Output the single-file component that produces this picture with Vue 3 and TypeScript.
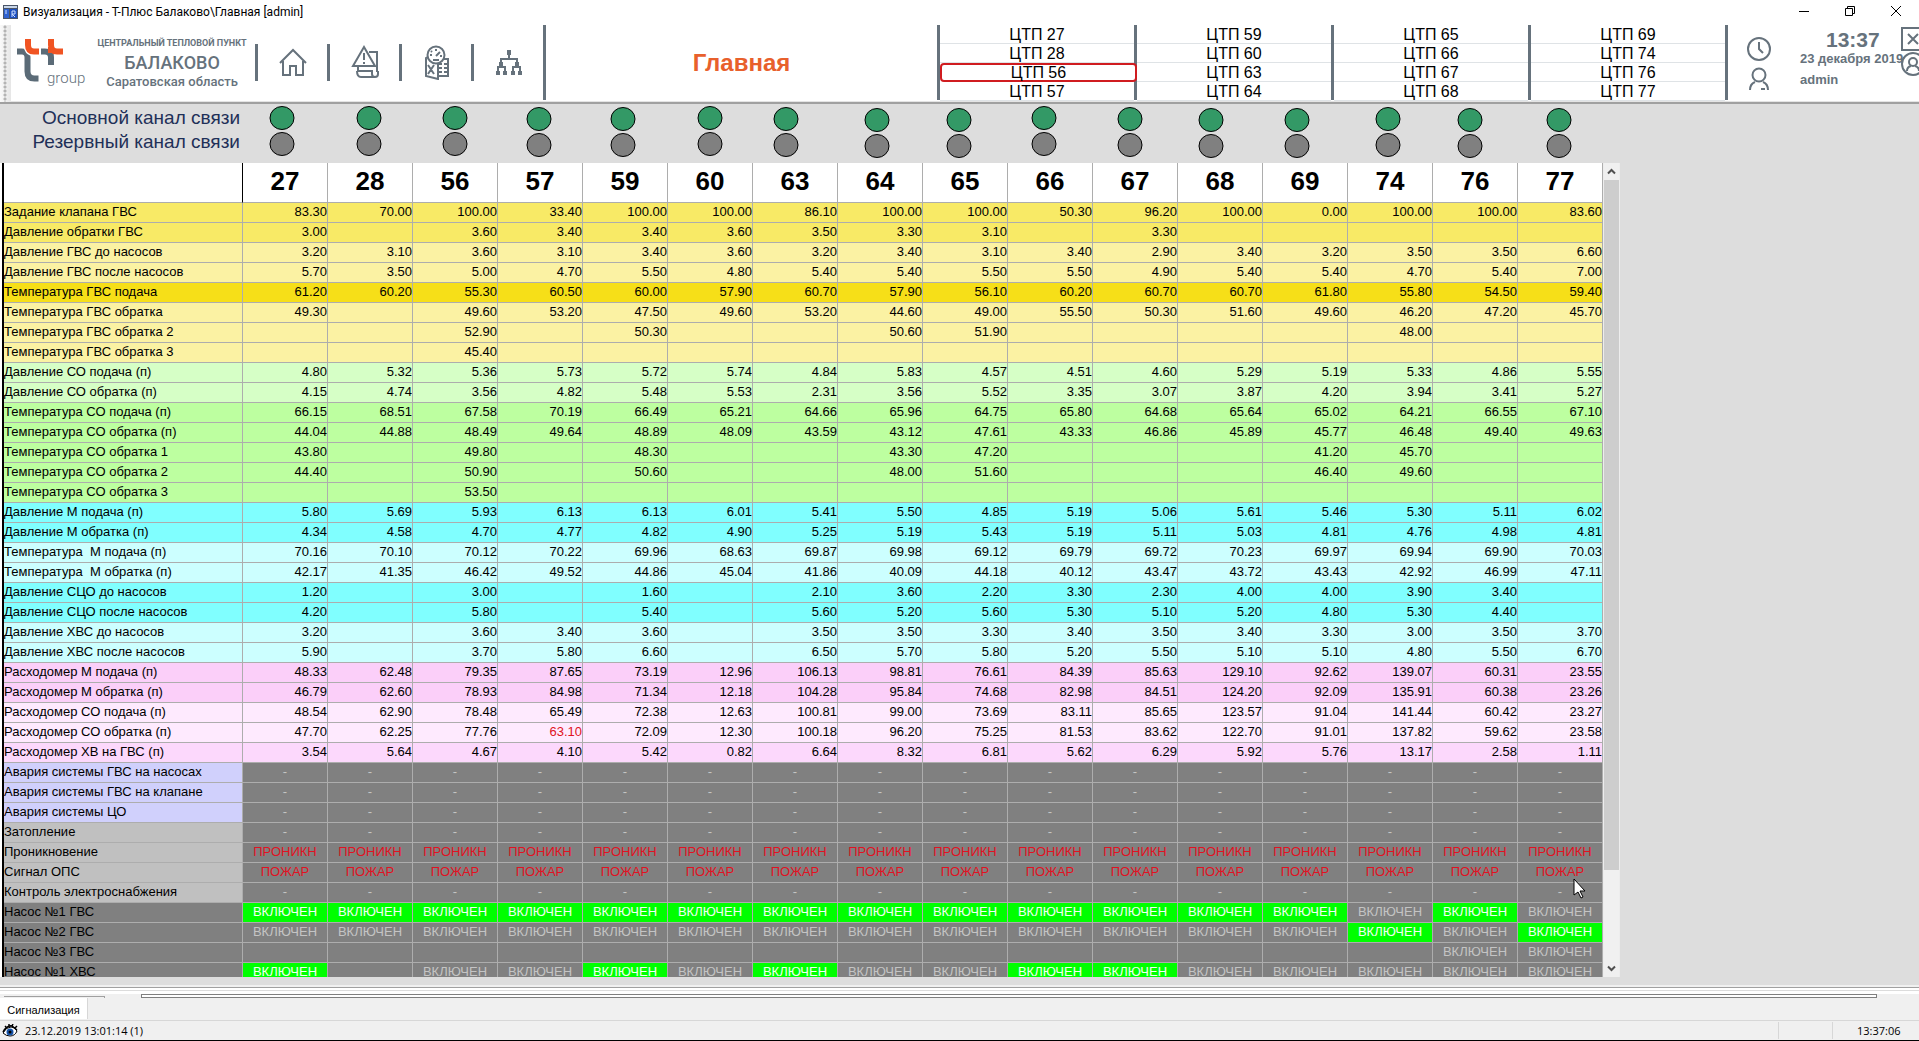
<script setup lang="ts">
interface Lamp {
  id: string
  x: number
  y: number
}

interface Row {
  label: string
  tone: string
  cells: string[]
}

const home = 'Главная'

// Link lamps: free positions inside the channel strip
const lamps: Lamp[] = [
  { id: '27', x: 40, y: 13 },
  { id: '28', x: 127, y: 13 },
  { id: '56', x: 213, y: 13 },
  { id: '57', x: 297, y: 14 },
  { id: '59', x: 381, y: 14 },
  { id: '60', x: 468, y: 13 },
  { id: '63', x: 544, y: 14 },
  { id: '64', x: 635, y: 15 },
  { id: '65', x: 717, y: 15 },
  { id: '66', x: 802, y: 13 },
  { id: '67', x: 888, y: 14 },
  { id: '68', x: 969, y: 15 },
  { id: '69', x: 1055, y: 15 },
  { id: '74', x: 1146, y: 14 },
  { id: '76', x: 1228, y: 15 },
  { id: '77', x: 1317, y: 15 },
]

const stationGroups: string[][] = [
  ['27', '28', '56', '57'],
  ['59', '60', '63', '64'],
  ['65', '66', '67', '68'],
  ['69', '74', '76', '77'],
]

const stations = stationGroups.flat()
const selected = '56'

// "_" is an empty cell
function row(label: string, tone: string, values: string): Row {
  return { label, tone, cells: values.split(' ').map((v) => (v === '_' ? '' : v)) }
}

function same(label: string, tone: string, value: string): Row {
  return { label, tone, cells: stations.map(() => value) }
}

const rows: Row[] = [
  row('Задание клапана ГВС', 'yellow', '83.30 70.00 100.00 33.40 100.00 100.00 86.10 100.00 100.00 50.30 96.20 100.00 0.00 100.00 100.00 83.60'),
  row('Давление обратки ГВС', 'yellow', '3.00 _ 3.60 3.40 3.40 3.60 3.50 3.30 3.10 _ 3.30 _ _ _ _ _'),
  row('Давление ГВС до насосов', 'cream', '3.20 3.10 3.60 3.10 3.40 3.60 3.20 3.40 3.10 3.40 2.90 3.40 3.20 3.50 3.50 6.60'),
  row('Давление ГВС после насосов', 'cream', '5.70 3.50 5.00 4.70 5.50 4.80 5.40 5.40 5.50 5.50 4.90 5.40 5.40 4.70 5.40 7.00'),
  row('Температура ГВС подача', 'gold', '61.20 60.20 55.30 60.50 60.00 57.90 60.70 57.90 56.10 60.20 60.70 60.70 61.80 55.80 54.50 59.40'),
  row('Температура ГВС обратка', 'cream', '49.30 _ 49.60 53.20 47.50 49.60 53.20 44.60 49.00 55.50 50.30 51.60 49.60 46.20 47.20 45.70'),
  row('Температура ГВС обратка 2', 'cream', '_ _ 52.90 _ 50.30 _ _ 50.60 51.90 _ _ _ _ 48.00 _ _'),
  row('Температура ГВС обратка 3', 'cream', '_ _ 45.40 _ _ _ _ _ _ _ _ _ _ _ _ _'),
  row('Давление СО подача (п)', 'mint', '4.80 5.32 5.36 5.73 5.72 5.74 4.84 5.83 4.57 4.51 4.60 5.29 5.19 5.33 4.86 5.55'),
  row('Давление СО обратка (п)', 'mint', '4.15 4.74 3.56 4.82 5.48 5.53 2.31 3.56 5.52 3.35 3.07 3.87 4.20 3.94 3.41 5.27'),
  row('Температура СО подача (п)', 'green', '66.15 68.51 67.58 70.19 66.49 65.21 64.66 65.96 64.75 65.80 64.68 65.64 65.02 64.21 66.55 67.10'),
  row('Температура СО обратка (п)', 'green', '44.04 44.88 48.49 49.64 48.89 48.09 43.59 43.12 47.61 43.33 46.86 45.89 45.77 46.48 49.40 49.63'),
  row('Температура СО обратка 1', 'green', '43.80 _ 49.80 _ 48.30 _ _ 43.30 47.20 _ _ _ 41.20 45.70 _ _'),
  row('Температура СО обратка 2', 'green', '44.40 _ 50.90 _ 50.60 _ _ 48.00 51.60 _ _ _ 46.40 49.60 _ _'),
  row('Температура СО обратка 3', 'green', '_ _ 53.50 _ _ _ _ _ _ _ _ _ _ _ _ _'),
  row('Давление М подача (п)', 'cyan', '5.80 5.69 5.93 6.13 6.13 6.01 5.41 5.50 4.85 5.19 5.06 5.61 5.46 5.30 5.11 6.02'),
  row('Давление М обратка (п)', 'cyan', '4.34 4.58 4.70 4.77 4.82 4.90 5.25 5.19 5.43 5.19 5.11 5.03 4.81 4.76 4.98 4.81'),
  row('Температура  М подача (п)', 'ice', '70.16 70.10 70.12 70.22 69.96 68.63 69.87 69.98 69.12 69.79 69.72 70.23 69.97 69.94 69.90 70.03'),
  row('Температура  М обратка (п)', 'ice', '42.17 41.35 46.42 49.52 44.86 45.04 41.86 40.09 44.18 40.12 43.47 43.72 43.43 42.92 46.99 47.11'),
  row('Давление СЦО до насосов', 'cyan', '1.20 _ 3.00 _ 1.60 _ 2.10 3.60 2.20 3.30 2.30 4.00 4.00 3.90 3.40 _'),
  row('Давление СЦО после насосов', 'cyan', '4.20 _ 5.80 _ 5.40 _ 5.60 5.20 5.60 5.30 5.10 5.20 4.80 5.30 4.40 _'),
  row('Давление ХВС до насосов', 'ice', '3.20 _ 3.60 3.40 3.60 _ 3.50 3.50 3.30 3.40 3.50 3.40 3.30 3.00 3.50 3.70'),
  row('Давление ХВС после насосов', 'ice', '5.90 _ 3.70 5.80 6.60 _ 6.50 5.70 5.80 5.20 5.50 5.10 5.10 4.80 5.50 6.70'),
  row('Расходомер М подача (п)', 'pink', '48.33 62.48 79.35 87.65 73.19 12.96 106.13 98.81 76.61 84.39 85.63 129.10 92.62 139.07 60.31 23.55'),
  row('Расходомер М обратка (п)', 'pink', '46.79 62.60 78.93 84.98 71.34 12.18 104.28 95.84 74.68 82.98 84.51 124.20 92.09 135.91 60.38 23.26'),
  row('Расходомер СО подача (п)', 'blush', '48.54 62.90 78.48 65.49 72.38 12.63 100.81 99.00 73.69 83.11 85.65 123.57 91.04 141.44 60.42 23.27'),
  row('Расходомер СО обратка (п)', 'blush', '47.70 62.25 77.76 !63.10 72.09 12.30 100.18 96.20 75.25 81.53 83.62 122.70 91.01 137.82 59.62 23.58'),
  row('Расходомер ХВ на ГВС (п)', 'rose', '3.54 5.64 4.67 4.10 5.42 0.82 6.64 8.32 6.81 5.62 6.29 5.92 5.76 13.17 2.58 1.11'),
  same('Авария системы ГВС на насосах', 'state lilac', '-'),
  same('Авария системы ГВС на клапане', 'state lilac', '-'),
  same('Авария системы ЦО', 'state lilac', '-'),
  same('Затопление', 'state silver', '-'),
  same('Проникновение', 'state silver', '!ПРОНИКН'),
  same('Сигнал ОПС', 'state silver', '!ПОЖАР'),
  same('Контроль электроснабжения', 'state silver', '-'),
  row('Насос №1 ГВС', 'state', 'on on on on on on on on on on on on on off on off'),
  row('Насос №2 ГВС', 'state', 'off off off off off off off off off off off off off on off on'),
  row('Насос №3 ГВС', 'state', '_ _ _ _ _ _ _ _ _ _ _ _ _ _ off off'),
  row('Насос №1 ХВС', 'state', 'on _ off off on off on off off on on off off off off off'),
]

function cellText(value: string): string {
  return value === 'on' || value === 'off' ? 'ВКЛЮЧЕН' : value.replace('!', '')
}

function cellClass(value: string): string {
  if (value.startsWith('!')) return 'alarm'
  return value === 'on' ? 'on' : ''
}
</script>

<template>
  <div class="shell">
    <header class="titlebar">
      <svg class="app-icon" width="15" height="14" viewBox="0 0 15 14">
        <rect width="15" height="14" fill="#4a5568" />
        <rect x="1" y="1" width="13" height="2" fill="#c9d6e8" />
        <rect x="1" y="4" width="5" height="9" fill="#2f62d0" />
        <rect x="7" y="4" width="7" height="9" fill="#1c4fc0" />
        <path d="M2 6h2M2 8h2M9 12V6h3v3h-3l3 3" stroke="#cfe0ff" fill="none" />
      </svg>
      <span class="caption">Визуализация - Т-Плюс Балаково\Главная [admin]</span>
      <div class="window-buttons">
        <button type="button" aria-label="Свернуть">
          <svg width="12" height="12" viewBox="0 0 12 12"><path d="M1 6.500h10" /></svg>
        </button>
        <button type="button" aria-label="Восстановить">
          <svg width="12" height="12" viewBox="0 0 12 12"><path d="M1.500 3.500h7v7h-7zM3.500 3.500v-2h7v7h-2" /></svg>
        </button>
        <button type="button" aria-label="Закрыть">
          <svg width="12" height="12" viewBox="0 0 12 12"><path d="M1 1l10 10M11 1L1 11" /></svg>
        </button>
      </div>
    </header>

    <div class="toolbar">
      <div class="grip"></div>
      <div class="logo">
        <svg width="46" height="43" viewBox="0 0 46 43" fill="none" stroke-width="6">
          <path d="M0 12.500h5q5.500 0 5.500 6v14q0 7 7 7h4" stroke="#5b6b77" />
          <path d="M24 12.500h4q6 0 6 6v7.500" stroke="#5b6b77" />
          <path d="M11 0v6q0 6.500 6 6.500h5" stroke="#fff" stroke-width="9" />
          <path d="M11 0v6q0 6.500 6 6.500h5" stroke="#f05423" />
          <path d="M34 0v6q0 6.500 6 6.500h6M31 11h4" stroke="#f05423" />
        </svg>
        <span class="logo-word">group</span>
      </div>
      <div class="site">
        <span class="site-kind">ЦЕНТРАЛЬНЫЙ ТЕПЛОВОЙ ПУНКТ</span>
        <strong class="site-name">БАЛАКОВО</strong>
        <span class="site-region">Саратовская область</span>
      </div>
      <nav class="tools">
        <button type="button" aria-label="Домой">
          <svg width="30" height="36" viewBox="0 0 30 36">
            <path d="M2 19L15 6l13 13M5 17v14h7v-9h6v9h7V17" />
          </svg>
        </button>
        <button type="button" aria-label="Тревоги">
          <svg width="30" height="36" viewBox="0 0 30 36">
            <path d="M14 3L3 22h22zM14 9v7M14 18v2M19 8h8v20M8 22v5M7 27h15v3q0 3 3 3t3-3v-3M7 27q0 6 4 6h14" />
          </svg>
        </button>
        <button type="button" aria-label="Отчёты">
          <svg width="30" height="36" viewBox="0 0 30 36">
            <circle cx="14" cy="11" r="8.500" />
            <path d="M14 12l4-4M8 11h2M14 5v2M9 7l1 1M18 12h2M11 16h6" />
            <path d="M6 13l-2 1v18l12 3V20M6 21l6 9M12 21l-6 9M22 15h4v17H16M17 20h3M22 20h3M17 24h3M22 24h3M17 28h3M22 28h3" />
          </svg>
        </button>
        <button type="button" aria-label="Структура">
          <svg width="30" height="36" viewBox="0 0 30 36">
            <path d="M15 7v9M7 21v-6h16v6M4 29v-6h7v6M19 29v-6h7v6" />
            <path class="solid" d="M13 6h4v5h-4zM5 18h4v4H5zM21 18h4v4h-4zM2 27h4v4H2zM9 27h4v4H9zM17 27h4v4h-4zM24 27h4v4h-4z" />
          </svg>
        </button>
      </nav>
      <h1 class="page-title">{{ home }}</h1>
      <nav class="stations">
        <div v-for="(group, g) in stationGroups" :key="g" class="station-column">
          <button
            v-for="id in group"
            :key="id"
            type="button"
            class="station"
            :class="{ selected: id === selected }"
          >ЦТП {{ id }}</button>
        </div>
      </nav>
      <div class="session">
        <div class="session-icons">
          <svg width="26" height="26" viewBox="0 0 26 26">
            <circle cx="13" cy="13" r="11" />
            <path d="M13 6v7l4 4" />
          </svg>
          <svg width="26" height="26" viewBox="0 0 26 26">
            <circle cx="13" cy="9" r="6.500" />
            <path d="M4 24q0-6 5-8M22 24q0-6-5-8M15 23h4" />
          </svg>
        </div>
        <div class="session-text">
          <time class="clock">13:37</time>
          <span class="date">23 декабря 2019</span>
          <span class="user">admin</span>
        </div>
        <div class="session-buttons">
          <button type="button" aria-label="Выход">
            <svg width="24" height="24" viewBox="0 0 24 24">
              <path d="M1 1h22v22H1zM7 7l10 10M17 7L7 17" />
            </svg>
          </button>
          <button type="button" aria-label="Сменить пользователя">
            <svg width="24" height="24" viewBox="0 0 24 24">
              <circle cx="12" cy="12" r="11" />
              <circle cx="12" cy="10" r="4" />
              <path d="M6 19q0-4 4-5M18 19q0-4-4-5" />
            </svg>
          </button>
        </div>
      </div>
    </div>

    <section class="channels">
      <div class="channel-names">
        <span>Основной канал связи</span>
        <span>Резервный канал связи</span>
      </div>
      <svg class="lamps">
        <g v-for="lamp in lamps" :key="lamp.id" stroke="#000">
          <ellipse :cx="lamp.x" :cy="lamp.y" rx="12" ry="11.500" fill="#339966" />
          <ellipse :cx="lamp.x" :cy="lamp.y + 26" rx="12" ry="11.500" fill="#808080" />
        </g>
      </svg>
    </section>

    <main class="board">
      <div class="viewport">
        <table>
          <colgroup>
            <col class="name-col" />
            <col v-for="id in stations" :key="id" class="value-col" />
          </colgroup>
          <thead>
            <tr>
              <td class="corner"></td>
              <th v-for="id in stations" :key="id" scope="col">{{ id }}</th>
            </tr>
          </thead>
          <tbody>
            <tr v-for="r in rows" :key="r.label" :class="r.tone">
              <th scope="row">{{ r.label }}</th>
              <td v-for="(value, i) in r.cells" :key="i" :class="cellClass(value)">{{ cellText(value) }}</td>
            </tr>
          </tbody>
        </table>
      </div>
      <div class="scrollbar">
        <button type="button" aria-label="Вверх">
          <svg width="9" height="7" viewBox="0 0 9 7"><path d="M1 5.500l3.500-3.500L8 5.500" /></svg>
        </button>
        <div class="thumb"></div>
        <div class="track"></div>
        <button type="button" aria-label="Вниз">
          <svg width="9" height="7" viewBox="0 0 9 7"><path d="M1 1.500L4.500 5 8 1.500" /></svg>
        </button>
      </div>
      <svg class="pointer" width="14" height="21" viewBox="0 0 14 21">
        <path d="M1 1v16l4-3 3 6 2-1-3-6h5z" fill="#fff" stroke="#000" />
      </svg>
    </main>

    <footer class="dock">
      <div class="dock-edge"></div>
      <div class="dock-strip">
        <div class="strip-short"></div>
        <div class="strip-long"></div>
      </div>
      <div class="tabs">
        <button type="button" class="tab">Сигнализация</button>
      </div>
      <div class="statusbar">
        <svg class="eye" width="16" height="14" viewBox="0 0 16 14">
          <path d="M1 9q3-6 8-6 4 0 6 4-2 5-7 5-4 0-7-3z" fill="#fff" stroke="#000" />
          <path d="M1 8Q5 1 10 2l5 4M4 3L3 2M7 2V0M10 2l1-2M13 4l2-2" fill="none" stroke="#000" stroke-width="1.500" />
          <circle cx="8" cy="8" r="3.500" fill="#1553a8" />
          <circle cx="8" cy="8" r="1.500" fill="#000" />
        </svg>
        <span class="event">23.12.2019 13:01:14 (1)</span>
        <span class="pane"></span>
        <time class="status-time">13:37:06</time>
      </div>
    </footer>
  </div>
</template>

<style>
body {
  background: #dddddd;
}
</style>

<style scoped>
.shell {
  display: flex;
  flex-direction: column;
  height: 100vh;
  overflow: hidden;
  background: #dddddd;
  color: #000;
  font-family: "Liberation Sans", Arial, sans-serif;
}

button {
  margin: 0;
  padding: 0;
  border: 0;
  background: transparent;
  color: inherit;
  font: inherit;
}

svg {
  display: block;
  flex: none;
}

/* Window caption */
.titlebar {
  display: flex;
  flex: none;
  align-items: center;
  height: 25px;
  padding: 0 0 2px 3px;
  box-sizing: border-box;
  background: #fff;
  font: 12px/22px Roboto, "Noto Sans", sans-serif;
}

.caption {
  flex: 1;
  padding-left: 5px;
}

.window-buttons {
  display: flex;
  align-self: flex-start;
}

.window-buttons button {
  display: flex;
  align-items: center;
  justify-content: center;
  width: 46px;
  height: 21px;
}

.window-buttons path {
  fill: none;
  stroke: #000;
}

/* Toolbar */
.toolbar {
  display: flex;
  flex: none;
  height: 77px;
  border-bottom: 2px solid #a0a0a0;
  background: #fff;
  box-shadow: inset 0 -1px #e4e4e4;
  margin-bottom: 1px;
  color: #66727c;
}

.grip {
  width: 11px;
  background:
    radial-gradient(circle at 5px 2px, #b4b4b4 1px, transparent 2px) 0 0 / 11px 4px,
    linear-gradient(90deg, #fafafa, #e6e6e6);
}

.logo {
  display: flex;
  width: 90px;
  padding: 14px 0 0 6px;
  box-sizing: border-box;
}

.logo-word {
  align-self: flex-start;
  margin: 30px 0 0 -16px;
  font: 300 15px/18px Roboto, sans-serif;
}

.site {
  display: flex;
  flex-direction: column;
  align-items: center;
  width: 142px;
  padding-top: 10px;
  font-family: Roboto, sans-serif;
  font-weight: 500;
  white-space: nowrap;
}

.site-kind {
  font-size: 9px;
  font-weight: 700;
  line-height: 16px;
}

.site-name {
  font-size: 18px;
  font-weight: 500;
  line-height: 24px;
}

.site-region {
  font-size: 13px;
  line-height: 14px;
}

.tools {
  display: flex;
  align-items: flex-start;
  padding: 19px 0 0 12px;
}

.tools button {
  display: flex;
  justify-content: center;
  width: 72px;
  height: 37px;
  box-sizing: border-box;
  border-left: 3px solid #66727c;
}

.tools path,
.tools circle {
  fill: none;
  stroke: #66727c;
  stroke-width: 2;
}

.tools .solid {
  fill: #66727c;
  stroke: none;
}

.page-title {
  flex: 1;
  height: 75px;
  margin: 0;
  border-left: 3px solid #66727c;
  color: #e8602c;
  font-size: 24px;
  line-height: 76px;
  text-align: center;
}

.stations {
  display: flex;
  height: 75px;
  border-right: 3px solid #66727c;
}

.station-column {
  display: flex;
  flex-direction: column;
  width: 197px;
  box-sizing: border-box;
  border-left: 3px solid #66727c;
}

.station {
  height: 19px;
  padding-top: 1px;
  box-sizing: border-box;
  border-bottom: 1px solid #dfe3e6;
  color: #000;
  font-size: 16px;
  line-height: 18px;
}

.station.selected {
  margin-right: -3px;
  padding-top: 0;
  border: 2px solid #d01c20;
  border-radius: 4px;
  background: #fff;
  line-height: 16px;
  z-index: 1;
}

.session {
  display: flex;
  width: 191px;
  overflow: hidden;
}

.session svg path,
.session svg circle {
  fill: none;
  stroke: #66727c;
  stroke-width: 2;
}

.session-icons {
  display: flex;
  flex: none;
  flex-direction: column;
  gap: 4px;
  padding: 11px 0 0 18px;
}

.session-text {
  display: flex;
  flex: none;
  flex-direction: column;
  width: 105px;
  padding: 4px 0 0 28px;
  font-size: 13px;
  font-weight: bold;
  white-space: nowrap;
}

.clock {
  padding-left: 26px;
  font-size: 21px;
  line-height: 22px;
}

.date {
  line-height: 15px;
}

.user {
  padding-top: 3px;
  line-height: 22px;
}

.session-buttons {
  display: flex;
  flex: none;
  flex-direction: column;
  gap: 1px;
  width: 24px;
  margin-left: -4px;
  padding-top: 2px;
}

/* Link channels */
.channels {
  display: flex;
  flex: none;
  height: 58px;
}

.channel-names {
  display: flex;
  flex: none;
  flex-direction: column;
  width: 242px;
  padding: 1px 2px 0 0;
  box-sizing: border-box;
  color: #1f3058;
  font-size: 19px;
  line-height: 24px;
  text-align: right;
}

.lamps {
  flex: 1;
  height: 58px;
}

/* Parameter table */
.board {
  position: relative;
  display: flex;
  flex: 1;
  min-height: 0;
  margin-bottom: 8px;
}

.viewport {
  flex: none;
  padding-left: 2px;
  overflow: hidden;
  background: #fff;
}

table {
  width: 1601px;
  table-layout: fixed;
  border-spacing: 0;
  border-left: 2px solid #000;
  font-size: 13px;
  line-height: 18px;
}

.name-col {
  width: 239px;
}

.value-col {
  width: 85px;
}

th,
td {
  height: 20px;
  padding: 0;
  box-sizing: border-box;
  border-right: 1px solid #adadad;
  border-bottom: 1px solid #adadad;
  overflow: hidden;
  text-align: right;
  vertical-align: top;
  white-space: pre;
}

thead td,
thead th {
  height: 40px;
  background: #fff;
  font-size: 26px;
  line-height: 36px;
  text-align: center;
}

thead .corner {
  border-right-color: #000;
}

tbody th {
  font-weight: normal;
  text-align: left;
}

.yellow { background: #f8ea66; }
.cream { background: #fbf2a3; }
.gold { background: #f6df18; }
.mint { background: #d6ffc6; }
.green { background: #bdffa0; }
.cyan { background: #80ffff; }
.ice { background: #ccffff; }
.pink { background: #fbcff9; }
.blush { background: #feeafe; }
.rose { background: #fcd8fc; }
.state { background: #808080; }
.lilac th { background: #d0d0fc; }
.silver th { background: #c0c0c0; }

.state td {
  color: #c4c4c4;
  text-align: center;
}

td.alarm,
.state td.alarm {
  color: #e01222;
}

.state td.on {
  background: #00ff00;
  color: #f2fff2;
}

.scrollbar {
  display: flex;
  flex: none;
  flex-direction: column;
  width: 15px;
  border: solid #ededed;
  border-width: 0 1px;
  background: #f0f0f0;
}

.scrollbar button {
  display: flex;
  flex: none;
  align-items: center;
  justify-content: center;
  height: 17px;
}

.scrollbar path {
  fill: none;
  stroke: #505050;
  stroke-width: 2;
}

.thumb {
  flex: 690;
  background: #cdcdcd;
}

.track {
  flex: 90;
}

.pointer {
  position: absolute;
  top: 715px;
  left: 1573px;
}

/* Bottom dock */
.dock {
  display: flex;
  flex: none;
  flex-direction: column;
  background: #f0f0f0;
  border-bottom: 1px solid #000;
}

.dock-edge {
  height: 2px;
  border-bottom: 1px solid #a0a0a0;
  background: #f0f0f0;
}

.dock-strip {
  display: flex;
  align-items: flex-end;
  height: 10px;
  padding: 0 42px 0 4px;
  box-sizing: border-box;
  background: linear-gradient(#fff 2px, #dcdcdc 2px, #dcdcdc 3px, #fff 3px, #fff 6px, #f0f0f0 6px);
}

.strip-short {
  width: 101px;
  height: 2px;
  box-sizing: border-box;
  border: solid #a0a0a0;
  border-width: 1px 1px 0 0;
}

.strip-long {
  flex: 1;
  height: 4px;
  margin-left: 36px;
  box-sizing: border-box;
  border: 1px solid #7f7f7f;
  background: #fff;
}

.tabs {
  display: flex;
  height: 22px;
  border-bottom: 1px solid #d7d7d7;
}

.tab {
  width: 88px;
  height: 21px;
  padding-top: 3px;
  box-sizing: border-box;
  border-right: 1px solid #d7d7d7;
  background: #fff;
  font-size: 11px;
}

.statusbar {
  display: flex;
  align-items: center;
  height: 19px;
  font: 11px/19px "Open Sans", "Noto Sans", sans-serif;
}

.eye {
  margin-left: 2px;
}

.event {
  flex: 1;
  padding-left: 7px;
}

.pane {
  width: 53px;
  height: 17px;
  border: solid #d7d7d7;
  border-width: 0 1px;
}

.status-time {
  width: 62px;
  padding-left: 24px;
}
</style>
